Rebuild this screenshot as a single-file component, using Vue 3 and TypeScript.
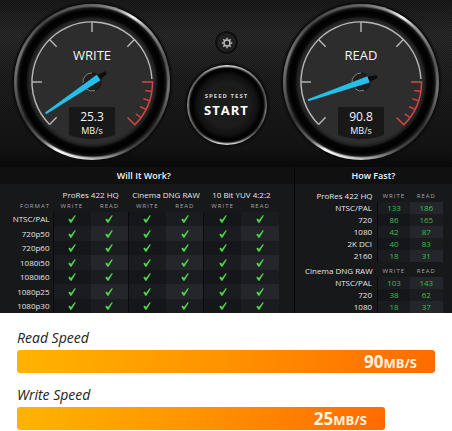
<script setup lang="ts">
interface Gauge {
  label: string
  value: string
  angle: number
}

interface SpeedRow {
  format: string
  write: number
  read: number
}

interface SpeedGroup {
  codec: string
  rows: SpeedRow[]
}

interface Bar {
  label: string
  value: number
  share: number
}

const gauges: Gauge[] = [
  { label: 'WRITE', value: '25.3', angle: 146 },
  { label: 'READ', value: '90.8', angle: 161 },
]

const codecs = ['ProRes 422 HQ', 'Cinema DNG RAW', '10 Bit YUV 4:2:2']
const formats = ['NTSC/PAL', '720p50', '720p60', '1080i50', '1080i60', '1080p25', '1080p30']

const speedGroups: SpeedGroup[] = [
  {
    codec: 'ProRes 422 HQ',
    rows: [
      { format: 'NTSC/PAL', write: 133, read: 186 },
      { format: '720', write: 86, read: 165 },
      { format: '1080', write: 42, read: 87 },
      { format: '2K DCI', write: 40, read: 83 },
      { format: '2160', write: 18, read: 31 },
    ],
  },
  {
    codec: 'Cinema DNG RAW',
    rows: [
      { format: 'NTSC/PAL', write: 103, read: 143 },
      { format: '720', write: 38, read: 62 },
      { format: '1080', write: 18, read: 37 },
    ],
  },
]

const bars: Bar[] = [
  { label: 'Read Speed', value: 90, share: 100 },
  { label: 'Write Speed', value: 25, share: 88 },
]

const majorTicks = [135, 180, 225, 270, 315]
const redTicks = [9, 18, 27, 36]
const gearTeeth = [0, 45, 90, 135, 180, 225, 270, 315]
</script>

<template>
  <main class="page">
    <section class="monitor">
      <div class="hero">
        <template v-for="(gauge, index) in gauges" :key="gauge.label">
          <div v-if="index === 1" class="controls">
            <button class="settings" type="button" aria-label="Settings">
              <svg class="gear" viewBox="-6 -6 12 12" aria-hidden="true">
                <circle r="3" />
                <line
                  v-for="tooth in gearTeeth"
                  :key="tooth"
                  x1="3.5"
                  x2="5.2"
                  :transform="`rotate(${tooth})`"
                />
              </svg>
            </button>
            <button class="start" type="button">
              <span class="start-small">SPEED TEST</span>
              <span class="start-big">START</span>
            </button>
          </div>
          <div class="gauge">
            <svg class="dial" viewBox="-78 -78 156 156" role="img" :aria-label="`${gauge.label} ${gauge.value} MB/s`">
              <path class="scale" d="M-42.4 42.4A60 60 0 1 1 59.9 -3" />
              <line
                v-for="tick in majorTicks"
                :key="tick"
                class="scale"
                x1="50"
                x2="60"
                :transform="`rotate(${tick})`"
              />
              <path class="red" d="M50 0H60.5A60.5 60.5 0 0 1 42.8 42.8L35.5 35.5" />
              <line
                v-for="tick in redTicks"
                :key="tick"
                class="red"
                x1="54"
                x2="60"
                :transform="`rotate(${tick})`"
              />
              <path class="readout" d="M-23 25H23V53Q0 61 -23 53Z" />
              <text class="name" y="-22">{{ gauge.label }}</text>
              <circle class="hub" r="9" />
              <path class="hub-shine" d="M-9 1A9 9 0 0 1 0 -9M3 8.500A9 9 0 0 1 -6 6.700" />
              <g :transform="`rotate(${gauge.angle})`">
                <path class="tail" d="M-17 -1.500L-6 -3V3L-17 1.500Z" />
                <path class="needle" d="M-8 -3.400L56 -1V1L-8 3.400Z" />
              </g>
              <text class="value" y="39">{{ gauge.value }}</text>
              <text class="unit" y="52">MB/s</text>
            </svg>
          </div>
        </template>
      </div>

      <div class="results">
        <section class="work">
          <h2>Will It Work?</h2>
          <table class="work-table">
            <thead>
              <tr class="codec-row">
                <td></td>
                <th v-for="codec in codecs" :key="codec" colspan="2" scope="colgroup">{{ codec }}</th>
              </tr>
              <tr class="mode-row">
                <th class="format" scope="col">FORMAT</th>
                <template v-for="codec in codecs" :key="codec">
                  <th scope="col">WRITE</th>
                  <th scope="col">READ</th>
                </template>
              </tr>
            </thead>
            <tbody>
              <tr v-for="format in formats" :key="format">
                <th class="format" scope="row">{{ format }}</th>
                <td v-for="n in codecs.length * 2" :key="n" :class="n % 2 ? 'write' : 'read'">
                  <svg class="check" viewBox="0 0 8 8" role="img" aria-label="Yes">
                    <path d="M0.300 4.600L1.800 3.600L3 5L6.700 0.200L7.900 0.600L3.500 7.700H2.300Z" />
                  </svg>
                </td>
              </tr>
            </tbody>
          </table>
        </section>

        <section class="fast">
          <h2>How Fast?</h2>
          <table class="fast-table">
            <tbody v-for="group in speedGroups" :key="group.codec">
              <tr class="group-row">
                <th class="codec" scope="col">{{ group.codec }}</th>
                <th scope="col">WRITE</th>
                <th scope="col">READ</th>
              </tr>
              <tr v-for="row in group.rows" :key="row.format">
                <th class="format" scope="row">{{ row.format }}</th>
                <td class="write">{{ row.write }}</td>
                <td class="read">{{ row.read }}</td>
              </tr>
            </tbody>
          </table>
        </section>
      </div>
    </section>

    <section class="bars">
      <div v-for="bar in bars" :key="bar.label" class="bar-item">
        <h3>{{ bar.label }}</h3>
        <div class="bar" :style="{ width: bar.share + '%' }">
          <span class="bar-number">{{ bar.value }}</span><span class="bar-unit">MB/S</span>
        </div>
      </div>
    </section>
  </main>
</template>

<style>
body {
  background: #fff;
}
</style>

<style scoped>
.page {
  font-family: 'Open Sans', 'Noto Sans', sans-serif;
  color: #e6e6e6;
}

.monitor {
  background: #17181a;
  overflow: hidden;
}

.hero {
  display: flex;
  justify-content: space-between;
  padding: 4px 13px 7px 14px;
  background:
    repeating-conic-gradient(rgba(0, 0, 0, 0.28) 0 25%, transparent 0 50%) 0 0 / 2px 2px,
    linear-gradient(#1b1b1b, #2b2b2b 22%, #202020 45%, #151515 90%, #0a0a0a);
}

.gauge {
  width: 156px;
  height: 156px;
  border-radius: 50%;
  background:
    radial-gradient(circle, #2d2d2d 61px, #1e1e1e 64px, #060606 66px, #000 71px, #151515 74px, transparent 76px),
    conic-gradient(#666, #999 20deg, #fff 32deg, #999 45deg, #555 75deg, #777 95deg, #333 125deg, #444 150deg, #999 170deg, #ccc 185deg, #fff 208deg, #666 220deg, #333 240deg, #666 270deg, #777 290deg, #444 320deg, #666);
  box-shadow: 0 0 2px 2px #0c0c0c;
}

.dial {
  display: block;
  width: 100%;
  height: 100%;
}

.scale {
  fill: none;
  stroke: #b9b9b9;
  stroke-width: 1.4;
}

.red {
  fill: none;
  stroke: #e04444;
  stroke-width: 1.4;
}

.readout {
  fill: #181818;
}

.hub {
  fill: #202020;
  stroke: #111;
}

.hub-shine {
  fill: none;
  stroke: #8b877d;
}

.tail {
  fill: #0c0c0c;
}

.needle {
  fill: #25bfe8;
}

.dial text {
  fill: #f4f4f4;
  text-anchor: middle;
}

.name {
  font-size: 13px;
}

.value {
  font-size: 12px;
}

.unit {
  font-size: 9px;
}

.controls {
  display: flex;
  flex-direction: column;
  align-items: center;
  gap: 11px;
  padding-top: 27px;
}

.settings {
  display: grid;
  place-items: center;
  width: 23px;
  height: 23px;
  padding: 0;
  border: 2px solid #0e0e0e;
  border-radius: 50%;
  background: #202020;
  box-shadow: 0 0 1px #444;
}

.gear {
  width: 12px;
  height: 12px;
  fill: none;
  stroke: #bbb;
  stroke-width: 1.5;
}

.start {
  display: flex;
  flex-direction: column;
  align-items: center;
  justify-content: center;
  width: 80px;
  height: 80px;
  padding: 0;
  border: 0;
  border-radius: 50%;
  background:
    radial-gradient(circle, #1c1c1c 22px, #111 30px, #000 35px, #0a0a0a 37px, transparent 39px),
    conic-gradient(#ddd, #999 30deg, #555 70deg, #777 100deg, #444 130deg, #ccc 170deg, #ddd 190deg, #555 225deg, #888 270deg, #666 310deg, #ddd);
  box-shadow: 0 0 2px 2px #0c0c0c;
  color: #fff;
  font-family: inherit;
  font-weight: 700;
}

.start-small {
  color: #d0d0d0;
  font-size: 6px;
  line-height: 9px;
  letter-spacing: 1px;
}

.start-big {
  font-size: 13px;
  line-height: 18px;
  letter-spacing: 1px;
}

.results {
  display: grid;
  grid-template-columns: 65fr 35fr;
}

.fast {
  border-left: 1px solid #050505;
}

h2 {
  margin: 0;
  background: #101010;
  color: #f4f4f4;
  font-size: 9px;
  font-weight: 600;
  line-height: 17px;
  text-align: center;
}

.work h2 {
  padding-right: 6px;
}

table {
  width: 100%;
  table-layout: fixed;
  border-collapse: collapse;
  font-size: 8px;
  line-height: 12px;
}

th,
td {
  box-sizing: border-box;
  padding: 0;
  font-weight: 400;
  text-align: center;
}

.work-table {
  width: 95%;
}

.codec-row td {
  width: 19%;
}

.codec-row th {
  height: 17px;
  padding-top: 5px;
}

.mode-row th {
  height: 11px;
  color: #a6a6a6;
  font-size: 6px;
  line-height: 11px;
  letter-spacing: 1px;
}

.work-table .format {
  padding-right: 3px;
  text-align: right;
}

.work-table tbody th,
.work-table tbody td {
  height: 14px;
}

.work-table tbody tr:nth-child(even) th,
.work-table tbody tr:nth-child(even) td {
  height: 15px;
}

.write {
  background: #15161a;
  border-left: 1px solid #0b0b0d;
}

.read {
  background: #1b1c20;
}

tr:nth-child(even) .write {
  background: #1b1c20;
}

tr:nth-child(even) .read {
  background: #25262b;
}

.check {
  display: block;
  width: 8px;
  height: 8px;
  margin: 0 auto;
  fill: #4fd34a;
}

.fast-table {
  width: 94%;
}

.fast-table th,
.fast-table td {
  height: 12px;
}

.fast-table .format,
.fast-table .codec {
  width: 56%;
  padding-right: 5px;
  color: #e6e6e6;
  text-align: right;
}

.fast-table .group-row th {
  height: 15px;
  vertical-align: bottom;
  color: #a6a6a6;
  font-size: 6px;
  letter-spacing: 1px;
}

.fast-table tbody:first-child .group-row th {
  height: 18px;
}

.fast-table .group-row .codec {
  color: #e6e6e6;
  font-size: 8px;
  letter-spacing: normal;
}

.fast-table td {
  color: #3bbd4f;
}

.bars {
  display: flex;
  flex-direction: column;
  gap: 11px;
  padding: 14px 17px 1px;
}

h3 {
  margin: 0;
  padding-bottom: 1px;
  color: #222;
  font-size: 14px;
  font-style: italic;
  font-weight: 400;
  line-height: 22px;
}

.bar {
  display: flex;
  align-items: baseline;
  justify-content: flex-end;
  box-sizing: border-box;
  height: 23px;
  padding-right: 18px;
  border-radius: 3px;
  background: linear-gradient(100deg, #ffb400, #ff9200 50%, #ff6a00);
  color: #fff4e4;
  font-weight: 700;
  line-height: 23px;
}

.bar-number {
  font-size: 17px;
}

.bar-unit {
  font-size: 13px;
}
</style>
